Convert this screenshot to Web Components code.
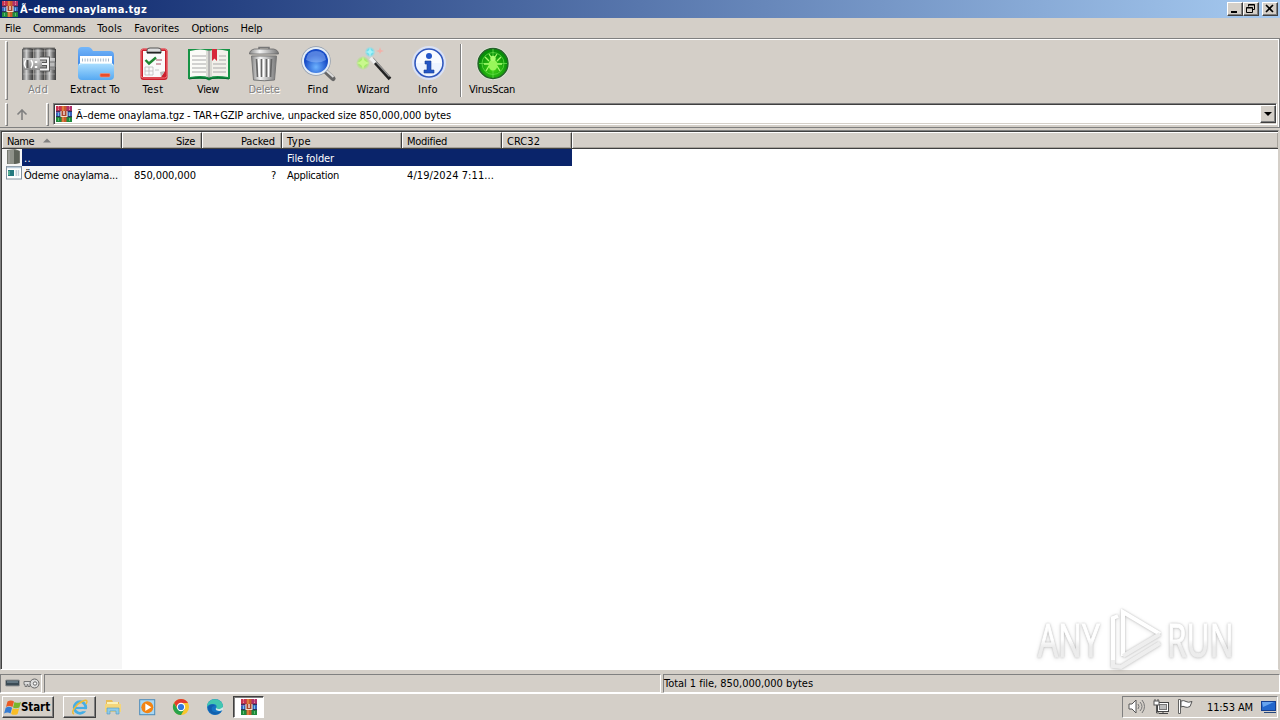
<!DOCTYPE html>
<html lang="en">
<head>
<meta charset="utf-8">
<title>Ã–deme onaylama.tgz</title>
<style>
    * { box-sizing: border-box; }
    body {
        margin: 0;
        width: 1280px;
        height: 720px;
        overflow: hidden;
        background: #d4cfc8;
        color: #000;
        font: 11px/13px "DejaVu Sans Condensed", "DejaVu Sans", sans-serif;
        font-stretch: condensed;
        --face: #d4cfc8;
        --shadow: #808080;
        --dark: #404040;
        --navy: #0a246a;
    }
</style>
</head>
<body>
<archive-window>
    <title-bar slot="title"><fit-text w="127">Ã–deme onaylama.tgz</fit-text></title-bar>
    <menu-bar slot="menu">
        <fit-text w="16">File</fit-text>
        <fit-text w="52">Commands</fit-text>
        <fit-text w="25">Tools</fit-text>
        <fit-text w="45">Favorites</fit-text>
        <fit-text w="37">Options</fit-text>
        <fit-text w="22">Help</fit-text>
    </menu-bar>
    <tool-bar slot="tools">
        <tool-button icon="add" w="20" style="width:52px" disabled>Add</tool-button>
        <tool-button icon="extract" w="50" style="width:62px">Extract To</tool-button>
        <tool-button icon="test" w="21" style="width:54px">Test</tool-button>
        <tool-button icon="view" w="22" style="width:56px">View</tool-button>
        <tool-button icon="trash" w="31" style="width:56px" disabled>Delete</tool-button>
        <tool-button icon="find" w="21" style="width:52px">Find</tool-button>
        <tool-button icon="wizard" w="33" style="width:58px">Wizard</tool-button>
        <tool-button icon="info" w="20" style="width:52px">Info</tool-button>
        <tool-separator></tool-separator>
        <tool-button icon="virus" w="46" style="width:52px">VirusScan</tool-button>
    </tool-bar>
    <address-bar slot="address"><fit-text w="375">Ã–deme onaylama.tgz - TAR+GZIP archive, unpacked size 850,000,000 bytes</fit-text></address-bar>
    <file-list slot="files">
        <file-row icon="folder" selected>
            <fit-text slot="name" w="7">..</fit-text>
            <fit-text slot="type" w="47">File folder</fit-text>
        </file-row>
        <file-row icon="exe">
            <fit-text slot="name" w="94">Ödeme onaylama...</fit-text>
            <fit-text slot="size" w="62">850,000,000</fit-text>
            <fit-text slot="packed" w="5">?</fit-text>
            <fit-text slot="type" w="52">Application</fit-text>
            <fit-text slot="modified" w="87">4/19/2024 7:11...</fit-text>
        </file-row>
    </file-list>
    <status-bar slot="status"><fit-text w="149">Total 1 file, 850,000,000 bytes</fit-text></status-bar>
</archive-window>
<task-bar></task-bar>
<water-mark></water-mark>

<script>
const svg = (w, h, body, box = `0 0 ${w} ${h}`) =>
    `<svg xmlns="http://www.w3.org/2000/svg" width="${w}" height="${h}" viewBox="${box}">${body}</svg>`;

// three stacked books with a belt and buckle
const books = size => svg(size, size, `
    <rect width="16" height="5" fill="#c8324f"/><rect x="10" width="6" height="5" fill="#b0306a"/>
    <rect y="5" width="16" height="6" fill="#3a62b8"/><rect y="5" width="6" height="2" fill="#7a5bb5"/>
    <rect y="11" width="16" height="5" fill="#1f8a3c"/>
    <path d="M0 5.300h16M0 10.700h16" stroke="#26213d" stroke-width=".9"/>
    <path d="M2.500 0v4M13.500 0v4" stroke="#e88ba0" stroke-width="1" stroke-dasharray="1.5 1"/>
    <path d="M2.500 6.500v3.500M13.500 6.500v3.500" stroke="#6cc7ea" stroke-width="1"/>
    <path d="M2.500 12v3M13.500 12v3" stroke="#5cc070" stroke-width="1"/>
    <path d="M5.500 0h5v16h-5z" fill="#c95a2d"/><path d="M7 0v16" stroke="#f0a04f"/>
    <path d="M5 5v5.500h6V5" fill="#a8432c" stroke="#f3dfc5" stroke-width="1.1"/>
    <path d="M8 5v4" stroke="#fff" stroke-width="1.2"/>`, "0 0 16 16");

const icons = {
    add: svg(34, 36, `
        <defs><linearGradient id="g"><stop stop-color="#555"/><stop offset=".4" stop-color="#d0d0d0"/><stop offset=".7" stop-color="#777"/><stop offset="1" stop-color="#3c3c3c"/></linearGradient>
        <linearGradient id="b" x2="0" y2="1"><stop stop-color="#ddd"/><stop offset="1" stop-color="#888"/></linearGradient></defs>
        <g fill="url(#g)"><path d="M0 3q5-2 11 0v31H0z"/><path d="M11.500 3q5-2 11 0v31h-11z"/><path d="M23 3q5-2 11 0v31H23z"/></g>
        <path d="M1 5h32M1 28h32" stroke="#ddd" stroke-width="1" opacity=".35"/>
        <path d="M1 2.500h32" stroke="#333" stroke-width="2" opacity=".55"/>
        <rect x="1" y="12" width="32" height="12" fill="url(#b)" opacity=".85"/>
        <path d="M4 14q-3 4 0 8M9 14q3 4 0 8" stroke="#fff" fill="none" stroke-width="1.5"/>
        <path d="M5.500 14v8" stroke="#555" stroke-width="2"/>
        <path d="M14 15v2M14 20v2" stroke="#fff" stroke-width="2.500"/>
        <path d="M18 12.500h8v11h-8M20 18h6" fill="none" stroke="#555" stroke-width="4"/>
        <path d="M18 12.500h8v11h-8M20 18h6" fill="none" stroke="#f2f2f2" stroke-width="2"/>
        <path d="M28 16h5v5h-5" fill="#bbb" stroke="#777"/>`),
    extract: svg(38, 36, `
        <defs><linearGradient id="g" x2="0" y2="1"><stop stop-color="#74b7fa"/><stop offset="1" stop-color="#256fdd"/></linearGradient>
        <linearGradient id="b" x2="0" y2="1"><stop stop-color="#acdfff"/><stop offset="1" stop-color="#56a9f2"/></linearGradient></defs>
        <path d="M1 5q0-4 4-4h6q3 0 5 4h17q4 0 4 4v20H1z" fill="url(#g)"/>
        <path d="M3 10h32v13H3z" fill="#fff"/>
        <path d="M5 14h27" stroke="#a4b7c9" stroke-width="3" stroke-dasharray="1 1.6"/>
        <path d="M1 20q0-3 4-3h28q4 0 4 3v10q0 4-4 4H5q-4 0-4-4z" fill="url(#b)"/>
        <path d="M2 19q1-1.5 4-1.5h27q3 0 3 2" fill="none" stroke="#e0f5ff"/>
        <rect x="23" y="27.500" width="10" height="3.500" rx="1" fill="#e94d2b" stroke="#fa9479" stroke-width=".6"/>`),
    test: svg(30, 36, `
        <rect x="1.5" y="2.5" width="27" height="31.5" rx="3" fill="#cc202d"/>
        <rect x="2" y="3" width="26" height="29" rx="2.5" fill="none" stroke="#f1757a"/>
        <path d="M4 5h22v20l-4 6H4z" fill="#fafafa"/><path d="M26 25l-4 6-1-5z" fill="#bbb"/>
        <path d="M8 7V4q0-2 3-2h8q3 0 3 2v3z" fill="#ddd" stroke="#555"/><path d="M8 6.500h14" stroke="#222" stroke-width="1.6"/>
        <path d="M6.5 14l3.5 3.500 7-6" fill="none" stroke="#218833" stroke-width="2.4"/>
        <path d="M17 14h6M17 18h5" stroke="#a56" stroke-width="1"/>
        <path d="M6 21h8v8H6zM10 21v8M6 25h8M16 24h4" fill="none" stroke="#bbb" stroke-width=".8"/>`),
    view: svg(44, 36, `
        <path d="M1 3h42v30H25l-3 1.5L19 33H1z" fill="#169345"/>
        <path d="M3 5q11-3 19 0v26q-8-2-19 0z" fill="#fbfbf7"/><path d="M22 5q8-3 19 0v26q-11-2-19 0z" fill="#f2f1ea"/>
        <path d="M22 4v28" stroke="#888" stroke-width="1.2"/><path d="M20 5v26M24 5v26" stroke="#cfcfc8" stroke-width="1.4"/>
        <path d="M5 10h14M5 14h14M5 18h14M5 22h14M5 26h14M26 18h13M26 22h13M26 26h13M32 10h7M32 14h7" stroke="#aaa" stroke-width="1.1"/>
        <path d="M25 3h5v12l-2.5-2.5L25 15z" fill="#d72638"/>
        <path d="M2 33q11-3 20 0 9-3 20 0" stroke="#0a6630" fill="none"/>`),
    trash: svg(32, 36, `
        <defs><linearGradient id="g"><stop stop-color="#888"/><stop offset=".35" stop-color="#f4f4f4"/><stop offset="1" stop-color="#777"/></linearGradient></defs>
        <path d="M11 3V1.500h10V3" fill="none" stroke="#777" stroke-width="1.5"/>
        <path d="M1.500 8q0-4 5-5h19q5 1 5 5z" fill="url(#g)" stroke="#666" stroke-width=".8"/>
        <path d="M3.500 10h25l-2 24q-10 1.500-21 0z" fill="url(#g)" stroke="#777"/>
        <path d="M8.500 13l1 18M13.500 13v18M18.500 13v18M23.500 13l-1 18" stroke="#666" stroke-width="1.700"/>
        <path d="M10.5 13l1 18M15.5 13v18M20.5 13v18" stroke="#fff" stroke-width="1.500"/>`),
    find: svg(36, 36, `
        <defs><radialGradient id="g" cx=".5" cy=".75"><stop stop-color="#6eb3ff"/><stop offset="1" stop-color="#174cc7"/></radialGradient></defs>
        <path d="M24 24l9 8.500" stroke="#666" stroke-width="5" stroke-linecap="round"/><path d="M24.5 23l9 8" stroke="#ddd" stroke-width="2"/>
        <circle cx="16" cy="15" r="14.7" fill="#8e9bad"/><circle cx="16" cy="15" r="14" fill="#e4edf7"/>
        <circle cx="16" cy="15" r="12" fill="url(#g)"/><path d="M6 14q1-9 10-9t10 9q-9 5-20 0z" fill="#a2c5ff" opacity=".45"/>`),
    wizard: svg(36, 36, `
        <defs><radialGradient id="g"><stop stop-color="#f4ffcc"/><stop offset=".5" stop-color="#a4ee62"/><stop offset="1" stop-color="#9be567" stop-opacity="0"/></radialGradient>
        <radialGradient id="c"><stop stop-color="#d6ffff"/><stop offset=".5" stop-color="#66deed"/><stop offset="1" stop-color="#8de" stop-opacity="0"/></radialGradient></defs>
        <path d="M16 13l18 20" stroke="#222" stroke-width="3.600"/><path d="M16.500 12l17 18.500" stroke="#999" stroke-width="1.2"/>
        <path d="M14.500 12l4.500 5" stroke="#eee" stroke-width="3.600"/>
        <circle cx="7" cy="17" r="7" fill="url(#g)"/><path d="M7 10l1.5 5 5 2-5 2L7 24l-1.5-5-5-2 5-2z" fill="#c9f88d"/>
        <circle cx="14" cy="6" r="5.5" fill="url(#c)"/><path d="M14 1l1 4 4 1-4 1-1 5-1-5-4-1 4-1z" fill="#a9f3f8"/>
        <path d="M24 1l1 3 3 1-3 1-1 2-1-2-3-1 3-1z" fill="#f2b0a8"/>`),
    info: svg(36, 36, `
        <circle cx="18" cy="17" r="17" fill="#d9e1f5"/><circle cx="18" cy="17" r="14" fill="#edf4ff" stroke="#3158bd" stroke-width="1.6"/>
        <path d="M5 17a13 13 0 0 1 26 0z" fill="#fff" opacity=".6"/>
        <circle cx="18" cy="10" r="3" fill="#2356c9"/><path d="M14 15h6v9h3v3H13v-3h3v-6h-2z" fill="#2456c6" stroke="#173f96" stroke-width=".6"/>`),
    virus: svg(36, 36, `
        <defs><radialGradient id="g" cy=".65"><stop stop-color="#45d916"/><stop offset="1" stop-color="#089009"/></radialGradient></defs>
        <circle cx="18" cy="17.5" r="16.5" fill="#e1e6db"/><circle cx="18" cy="17.5" r="15" fill="url(#g)" stroke="#28622b" stroke-width="1.4"/>
        <circle cx="18" cy="17.5" r="11" fill="none" stroke="#60db44" stroke-width=".8"/><path d="M18 3v29M4 17.5h28" stroke="#66dd4a" stroke-width=".8"/>
        <path d="M14 15l-4-4M14 18H9M14 20l-3 5M22 15l4-4M22 18h5M22 20l3 5M16 11l-2-3M20 11l2-3" stroke="#a7fb6d" stroke-width="1.3" fill="none"/>
        <ellipse cx="18" cy="19" rx="4.500" ry="5.5" fill="#98f75a"/><circle cx="18" cy="12.500" r="2.700" fill="#a7fb6d"/>`),
    folder: svg(16, 17, `<path d="M1 1l8-1 5 2v12l-5 1H1z" fill="#777a72"/><path d="M2 1h6v14H2z" fill="#8f928a"/><path d="M8 1l5 1v12l-5 1z" fill="#5d6259"/><path d="M3 2v12" stroke="#aaa"/>`),
    exe: svg(16, 14, `<rect x=".5" y=".5" width="15" height="12.5" fill="#fff" stroke="#8493a0"/><path d="M1 1.5h14" stroke="#b9cbda" stroke-width="1.5"/><rect x="2" y="4" width="6" height="6" fill="#267a80"/><path d="M3 5v4" stroke="#6cc49b" stroke-width="1.4"/><path d="M9.500 5h4M9.500 7h4M9.500 9h4" stroke="#8ba0b2" stroke-dasharray="1.500 .7"/>`),
    flag: svg(18, 17, `
        <path d="M3.500 2.500Q7 .3 10 2.500L8.500 8Q5 6 2 8z" fill="#ea5a24"/><path d="M10.500 3q3 1.700 6.500 0l-1.600 5.600q-3.200 1.600-6.400-.2z" fill="#79b62c"/>
        <path d="M1.700 8.800q3.300-2 6.400 0L6.500 14.500q-3-1.800-6.400 0z" fill="#357cd2"/><path d="M8.700 9.200q3.200 1.700 6.500 0L13.600 15q-3 1.700-6.500 0z" fill="#f9bd25"/>`),
    ie: svg(18, 18, `<circle cx="9" cy="9.5" r="5.800" fill="none" stroke="#45aee5" stroke-width="2.800"/><path d="M4 10h11" stroke="#45aee5" stroke-width="2.200"/><path d="M10.500 11.200h6.500v2h-6.500z" fill="#d4cfc8"/><path d="M3 16c-4-1 2-10 9-13 4-2 5 0 3 3" fill="none" stroke="#edbb35" stroke-width="1.5"/>`),
    explorer: svg(18, 18, `<path d="M2 2h6l1 2h6v9H2z" fill="#e8bd58"/><path d="M3 4h11v8H3z" fill="#faf1b8"/><path d="M1 6h16v8H1z" fill="#f4d67b"/><path d="M3 10h12v6h-3v-3H6v3H3z" fill="#8fcbe8" stroke="#4d98c3" stroke-width=".6"/>`),
    player: svg(17, 17, `<rect x=".7" y=".7" width="15" height="15" fill="#a9d7f3" stroke="#4c8bb9"/><circle cx="8.3" cy="8.3" r="6" fill="#f38413"/><path d="M6.3 4.5v7.5l6-3.8z" fill="#fff"/>`),
    chrome: svg(18, 18, `<circle cx="9" cy="9" r="8" fill="#f9c62c"/><path d="M2.1 5A8 8 0 0 1 16 5H9L6 11z" fill="#e33b2e"/><path d="M2 5a8 8 0 0 0 7 12l3.5-6H5.5z" fill="#28a34b"/><circle cx="9" cy="9" r="4.2" fill="#fff"/><circle cx="9" cy="9" r="3.1" fill="#3278dd"/>`),
    edge: svg(18, 18, `<circle cx="9" cy="9" r="8" fill="#1574c4"/><path d="M1 9C1-1 16-1 17 8c0 4-6 5-7 2 1-1 1-4-3-4-3 0-5 1-6 3z" fill="#42c7b0"/><path d="M6 9c-2 5 4 7 10 4-5 6-13 4-14-3 0-3 5-5 7-2-1 0-2 0-3 1z" fill="#1260ad"/><path d="M10 10c2 2 5 1 7-1v3l-3 1c-3 0-5-1-4-3z" fill="#d4e9e9"/>`),
    sound: svg(18, 16, `<path d="M1 5h3l4-4v13l-4-4H1z" fill="#fff" stroke="#555"/><path d="M10 5q2 2.5 0 5M12 3q4 4.5 0 9M14 1q5 6.5 0 13" fill="none" stroke="#777" stroke-width="1"/>`),
    network: svg(17, 16, `<rect x="4.500" y="3.500" width="11" height="9" fill="#fff" stroke="#444"/><rect x="6.500" y="5.500" width="7" height="5" fill="#bbb" stroke="#777"/><path d="M6 14.5h9M10 13v2" stroke="#444"/><rect x="1" y="2" width="5" height="4" fill="#fff" stroke="#555"/><path d="M2 0v2M5 0v2M3.5 6v8H6" fill="none" stroke="#555"/>`),
    alert: svg(17, 16, `<path d="M1.500 .5h2v14h-2z" fill="#fff" stroke="#555" stroke-width=".9"/><path d="M4 2q3-1 5 .5 2 1.500 6 0l-2 5q-3 1.500-5 .5-2-1.500-4 0z" fill="#fff" stroke="#555"/>`),
    desktop: svg(16, 14, `<path d="M0 1h15v10H0z" fill="#153f91"/><path d="M1 2h13v8H1z" fill="#2367cc"/><path d="M1 2h12L2 7z" fill="#67a4ef"/><path d="M3 12.5h12" stroke="#25477c"/>`)
};
icons.books = books(16);

function define(name, css, html) {
    customElements.define(name, class extends HTMLElement {
        constructor() {
            super();
            this.attachShadow({ mode: "open" });
        }

        connectedCallback() {
            this.shadowRoot.innerHTML = `
                <style>
                    *, :host { box-sizing: border-box; }
                    svg { display: block; flex: none; }
                    ${css}
                </style>
                ${typeof html === "function" ? html(this) : html}
            `;
        }
    });
}

define("archive-window", `
    :host { display: flex; flex-direction: column; height: 693px; }
    .bands { height: 90px; border: 1px solid var(--shadow); border-left: 0; box-shadow: inset 0 1px #fff, inset -1px 0 #fff; padding: 2px 2px 0 0; }
`, `
    <slot name="title"></slot>
    <slot name="menu"></slot>
    <div class="bands"><slot name="tools"></slot><slot name="address"></slot></div>
    <slot name="files"></slot>
    <slot name="status"></slot>
`);

define("title-bar", `
    :host { display: flex; align-items: center; height: 18px; padding: 0 2px; color: #fff; font-weight: bold; background: linear-gradient(90deg, var(--navy), #a6caf0); }
    .caption { flex: 1; padding-left: 2px; }
    .btn { width: 16px; height: 14px; background: var(--face); border: 1px solid; border-color: #fff var(--dark) var(--dark) #fff; box-shadow: inset -1px -1px var(--shadow); }
    .close { margin-left: 3px; }
`, `
    ${icons.books}
    <div class="caption"><slot></slot></div>
    <div class="btn">${svg(14, 12, `<path d="M3 9h6" stroke="#000" stroke-width="2"/>`)}</div>
    <div class="btn">${svg(14, 12, `<path d="M5 4V2h6v5H9M5 2.5h6M3 5h6v5H3zM3 5.5h6" fill="none" stroke="#000" transform="translate(-.5 -.5)"/>`)}</div>
    <div class="btn close">${svg(14, 12, `<path d="M3 2l7 7M10 2l-7 7" stroke="#000" stroke-width="1.6"/>`)}</div>
`);

define("menu-bar", `
    :host { display: flex; gap: 12.1px; height: 20px; padding: 4px 5px 0; }
`, `<slot></slot>`);

define("bar-grip", `
    :host { display: block; flex: none; width: 3px; height: 100%; border: 1px solid; border-color: #fff var(--shadow) var(--shadow) #fff; }
`, ``);

define("tool-bar", `
    :host { display: flex; height: 59px; padding: 0 0 0 5px; }
    .buttons { display: flex; margin-left: 4px; }
`, `<bar-grip></bar-grip><div class="buttons"><slot></slot></div>`);

define("tool-button", `
    :host { display: flex; flex-direction: column; align-items: center; padding-top: 5px; }
    :host([disabled]) { color: #808080; text-shadow: 1px 1px #fff; }
    svg { margin-left: 1px; }
    :host([icon="trash"]) svg, :host([icon="find"]) svg { margin-left: 0; }
    fit-text { margin-top: 1px; }
`, el => `${icons[el.getAttribute("icon")]}<fit-text w="${el.getAttribute("w")}">${el.textContent}</fit-text>`);

define("tool-separator", `
    :host { display: block; width: 2px; height: 53px; margin: 3px 4px 0 6px; border-left: 1px solid var(--shadow); border-right: 1px solid #fff; }
`, ``);

define("address-bar", `
    :host { display: flex; height: 23px; margin-top: 3px; padding: 0 0 0 5px; }
    .up { width: 38px; padding: 6px 0 0 8px; }
    .field { display: flex; flex: 1; align-items: center; margin-left: 4px; height: 22px; padding-left: 2px; background: #fff; border: 1px solid; border-color: var(--shadow) #fff #fff var(--shadow); box-shadow: inset 1px 1px var(--dark), inset -1px -1px var(--face); }
    .text { flex: 1; padding: 2px 0 0 4px; }
    .drop { width: 16px; height: 18px; background: var(--face); border: 1px solid; border-color: #fff var(--dark) var(--dark) #fff; box-shadow: inset -1px -1px var(--shadow); }
`, `
    <bar-grip></bar-grip>
    <div class="up">${svg(13, 12, `<path d="M6 11V1M1.5 5.5L6 1l4.500 4.500" fill="none" stroke="#808080" stroke-width="1.6"/>`)}</div>
    <bar-grip></bar-grip>
    <div class="field">
        ${icons.books}
        <div class="text"><slot></slot></div>
        <div class="drop">${svg(14, 16, `<path d="M3 6h8l-4 4z"/>`)}</div>
    </div>
`);

define("file-list", `
    :host { display: flex; flex-direction: column; flex: 1; margin: 2px 1px 0 0; border: 1px solid; border-color: var(--shadow) var(--face) #fff var(--shadow); box-shadow: inset 1px 1px var(--dark); padding: 1px 0 0 1px; }
    .head { display: flex; height: 17px; background: var(--face); border-bottom: 1px solid var(--dark); }
    .head div { display: flex; padding: 3px 6px 0 4px; border-top: 1px solid #fff; border-left: 1px solid #fff; border-right: 1px solid var(--dark); height: 16px; line-height: 12px; box-shadow: inset -1px -1px #a8a49c; }
    .head .right { justify-content: flex-end; }
    .head .rest { flex: 1; border-right: 0; }
    .arrow { margin: 2px 0 0 9px; }
    .body { flex: 1; background: linear-gradient(90deg, #f6f6f6 120px, #fff 120px); }
`, `
    <div class="head">
        <div style="width:120px"><fit-text w="27">Name</fit-text><span class="arrow">${svg(8, 5, `<path d="M0 4.500h8L4 .5z" fill="#808080"/>`)}</span></div>
        <div class="right" style="width:80px"><fit-text w="19">Size</fit-text></div>
        <div class="right" style="width:80px"><fit-text w="34">Packed</fit-text></div>
        <div style="width:120px"><fit-text w="24">Type</fit-text></div>
        <div style="width:100px"><fit-text w="40">Modified</fit-text></div>
        <div style="width:70px"><fit-text w="33">CRC32</fit-text></div>
        <div class="rest"></div>
    </div>
    <div class="body"><slot></slot></div>
`);

define("file-row", `
    :host { display: grid; grid-template-columns: 20px 100px 80px 80px 120px 100px 70px; width: 570px; height: 17px; }
    :host([selected]) { color: #fff; background: linear-gradient(90deg, #f6f6f6 20px, var(--navy) 20px); }
    div { padding: 3px 6px 0 5px; }
    .icon { padding: 0 0 0 4px; }
    .name { padding-left: 2px; padding-right: 0; }
    .right { display: flex; justify-content: flex-end; }
`, el => `
    <div class="icon">${icons[el.getAttribute("icon")]}</div>
    <div class="name"><slot name="name"></slot></div>
    <div class="right"><slot name="size"></slot></div>
    <div class="right"><slot name="packed"></slot></div>
    <div><slot name="type"></slot></div>
    <div><slot name="modified"></slot></div>
    <div></div>
`);

define("status-bar", `
    :host { display: flex; gap: 2px; height: 23px; padding-top: 4px; }
    div { height: 19px; border: 1px solid; border-color: var(--shadow) #fff #fff var(--shadow); }
    .icons { display: flex; align-items: center; gap: 3px; width: 42px; padding: 0 0 1px 4px; }
    .mid { width: 617px; }
    .total { flex: 1; padding: 2px 0 0 0; }
`, `
    <div class="icons">
        ${svg(15, 8, `<rect x=".5" y="1" width="14" height="6" rx="1" fill="#3b4a54" stroke="#999"/><path d="M2 3h11" stroke="#8ba0ad"/>`)}
        ${svg(17, 11, `<path d="M9 3.500H1v3h1v2h2v-2h1v2h2v-2h3" fill="#ddd" stroke="#777"/><circle cx="11.500" cy="5.500" r="4.500" fill="#ddd" stroke="#666"/><circle cx="12" cy="5.500" r="1.700" fill="#fff" stroke="#666"/>`)}
    </div>
    <div class="mid"></div>
    <div class="total"><slot></slot></div>
`);

define("task-bar", `
    :host { display: flex; align-items: center; height: 27px; border-top: 1px solid #fff; padding: 0 2px; }
    .btn { display: flex; align-items: center; height: 22px; border: 1px solid; border-color: #fff var(--dark) var(--dark) #fff; box-shadow: inset -1px -1px var(--shadow); }
    .start { width: 52px; padding-left: 1px; font-weight: bold; font-size: 11.5px; }
    .start svg { margin-right: -1px; }
    .ie { width: 33px; margin-left: 9px; padding-left: 7px; }
    .quick { display: flex; width: 34px; justify-content: center; }
    .active { width: 31px; margin-left: 1px; padding-left: 7px; background: #fff; border-color: var(--dark) #fff #fff var(--dark); box-shadow: inset 1px 1px var(--shadow); }
    .space { flex: 1; }
    .tray { display: flex; align-items: center; width: 156px; height: 22px; padding-left: 5px; border: 1px solid; border-color: var(--shadow) #fff #fff var(--shadow); }
    .tray svg { margin-right: 7px; }
    .tray fit-text { margin: 0 8px 0 6px; }
`, `
    <div class="btn start">${icons.flag}<fit-text w="29">Start</fit-text></div>
    <div class="btn ie">${icons.ie}</div>
    <div class="quick">${icons.explorer}</div>
    <div class="quick">${icons.player}</div>
    <div class="quick">${icons.chrome}</div>
    <div class="quick">${icons.edge}</div>
    <div class="btn active">${icons.books}</div>
    <div class="space"></div>
    <div class="tray">${icons.sound}${icons.network}${icons.alert}<fit-text w="46">11:53 AM</fit-text>${icons.desktop}</div>
`);

// translucent logo floating over the list
define("water-mark", `
    :host { position: absolute; left: 1030px; top: 604px; filter: drop-shadow(0 0 1px rgba(0,0,0,.22)) drop-shadow(0 1px 2px rgba(0,0,0,.12)); }
    svg { overflow: visible; }
    text { font: 46px/1 "Open Sans", sans-serif; font-stretch: normal; stroke: url(#w); stroke-width: 1px; }
`, svg(230, 70, `
    <defs><linearGradient id="w" x2="0" y2="1"><stop offset=".5" stop-color="#fff"/><stop offset=".62" stop-color="#ececec"/></linearGradient></defs>
    <g fill="url(#w)">
        <text transform="translate(8 53) scale(.69 1)">ANY</text>
        <text transform="translate(137 53) scale(.69 1)">RUN</text>
    </g>
    <g fill="none" stroke-width="4" stroke="#fff">
        <path d="M93 52V8l37 22" /><path d="M83 57V14l5-2"/>
    </g>
    <g fill="none" stroke-width="4" stroke="#eee">
        <path d="M93 52l37-22M83 56v6l8 1 39-24"/>
    </g>`));

// spreads its letters so the text takes exactly the given width
customElements.define("fit-text", class extends HTMLElement {
    constructor() {
        super();
        this.attachShadow({ mode: "open" });
        this.shadowRoot.innerHTML = `
            <style>
                :host { display: block; white-space: nowrap; flex: none; }
                span { display: inline-block; }
            </style>
            <span><slot></slot></span>
        `;
    }

    connectedCallback() {
        const width = Number(this.getAttribute("w"));
        const span = this.shadowRoot.querySelector("span");
        const extra = width - span.getBoundingClientRect().width;
        span.style.letterSpacing = `${extra / this.textContent.length}px`;
        this.style.width = `${width}px`;
    }
});
</script>
</body>
</html>
